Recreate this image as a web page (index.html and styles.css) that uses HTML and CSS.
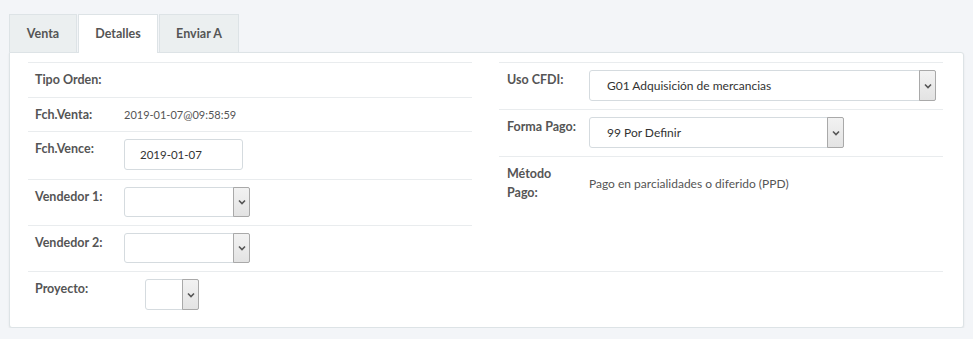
FILE: index.html
```html
<!DOCTYPE html>
<html lang="es">
<head>
  <meta charset="UTF-8" />
  <title>Detalles de venta</title>
  <link rel="stylesheet" href="styles.css">
</head>
<body>
  <div class="page">
    <ul class="tabs">
      <li class="tab tab-venta">Venta</li>
      <li class="tab tab-detalles active">Detalles</li>
      <li class="tab tab-enviar">Enviar A</li>
    </ul>

    <div class="panel">
      <div class="cols">
        <div class="col col-left">
          <div class="row">
            <label class="lbl">Tipo Orden:</label>
            <div class="val"></div>
          </div>
          <div class="row row-short">
            <label class="lbl">Fch.Venta:</label>
            <div class="val val-date">2019-01-07@09:58:59</div>
          </div>
          <div class="row row-input">
            <label class="lbl">Fch.Vence:</label>
            <div class="val"><div class="input date">2019-01-07</div></div>
          </div>
          <div class="row row-select">
            <label class="lbl">Vendedor 1:</label>
            <div class="val">
              <div class="select sel-vend"><span class="sel-text"></span><span class="arrow"><svg width="8" height="6" viewBox="0 0 8 6"><path d="M1 1.5 L4 4.5 L7 1.5" fill="none" stroke="#555" stroke-width="1.6"/></svg></span></div>
            </div>
          </div>
          <div class="row row-select">
            <label class="lbl">Vendedor 2:</label>
            <div class="val">
              <div class="select sel-vend"><span class="sel-text"></span><span class="arrow"><svg width="8" height="6" viewBox="0 0 8 6"><path d="M1 1.5 L4 4.5 L7 1.5" fill="none" stroke="#555" stroke-width="1.6"/></svg></span></div>
            </div>
          </div>
        </div>

        <div class="col col-right">
          <div class="row">
            <label class="lbl">Uso CFDI:</label>
            <div class="val">
              <div class="select sel-cfdi"><span class="sel-text">G01 Adquisición de mercancias</span><span class="arrow"><svg width="8" height="6" viewBox="0 0 8 6"><path d="M1 1.5 L4 4.5 L7 1.5" fill="none" stroke="#555" stroke-width="1.6"/></svg></span></div>
            </div>
          </div>
          <div class="row">
            <label class="lbl">Forma Pago:</label>
            <div class="val">
              <div class="select sel-forma"><span class="sel-text">99 Por Definir</span><span class="arrow"><svg width="8" height="6" viewBox="0 0 8 6"><path d="M1 1.5 L4 4.5 L7 1.5" fill="none" stroke="#555" stroke-width="1.6"/></svg></span></div>
            </div>
          </div>
          <div class="row row-fill">
            <label class="lbl lbl-wrap">Método Pago:</label>
            <div class="val val-metodo">Pago en parcialidades o diferido (PPD)</div>
          </div>
        </div>
      </div>

      <div class="row row-full">
        <label class="lbl lbl-proy">Proyecto:</label>
        <div class="val">
          <div class="select sel-proy"><span class="sel-text"></span><span class="arrow"><svg width="8" height="6" viewBox="0 0 8 6"><path d="M1 1.5 L4 4.5 L7 1.5" fill="none" stroke="#555" stroke-width="1.6"/></svg></span></div>
        </div>
      </div>
    </div>
  </div>
</body>
</html>
```

FILE: styles.css
```css
* { box-sizing: border-box; margin: 0; padding: 0; }
body {
  background: #f3f5f8;
  font-family: "Lato", "Liberation Sans", sans-serif;
  font-size: 12px;
  color: #555;
}
.page { padding: 14px 9px 0 9px; }

/* tabs */
.tabs {
  list-style: none;
  display: flex;
  height: 38px;
  position: relative;
  z-index: 1;
}
.tab {
  background: #ebeff0;
  border: 1px solid #dde3e6;
  border-bottom: none;
  margin-right: 1px;
  height: 38px;
  line-height: 37px;
  text-align: center;
  font-weight: 700;
  font-size: 12.5px;
  color: #555;
}
.tab-venta { width: 68px; }
.tab-detalles { width: 80px; }
.tab-enviar { width: 80px; }
.tab.active { background: #fff; height: 39px; }

/* panel */
.panel {
  background: #fff;
  border: 1px solid #dde3e6;
  border-radius: 0 3px 3px 3px;
  box-shadow: 0 1px 2px rgba(0, 0, 0, 0.08);
  width: 955px;
  padding: 9px 20px 9px 18px;
}
.cols {
  display: grid;
  grid-template-columns: 444px 444px;
  column-gap: 27px;
}
.col { display: flex; flex-direction: column; }
.row {
  display: flex;
  border-top: 1px solid #e9ecee;
  padding: 8px 0 8px 7px;
  line-height: 18px;
}
.row-short { padding-bottom: 7px; }
.row-input { padding-top: 7px; padding-bottom: 9px; }
.row-select { padding-top: 7px; padding-bottom: 8px; }
.row-full { padding-top: 7px; padding-bottom: 8px; }
.col-right .row { padding-left: 8px; padding-top: 7px; }
.row-fill { flex: 1; }
.lbl {
  font-weight: 700;
  font-size: 12.5px;
  color: #555;
  width: 89px;
  flex-shrink: 0;
}
.row-input .lbl, .row-select .lbl, .row-full .lbl, .col-right .lbl { padding-top: 1px; }
.col-right .lbl { width: 82px; }
.lbl-wrap { line-height: 19px; padding-right: 14px; }
.col-right .lbl-wrap { padding-top: 0; }
.lbl-proy { width: 110px; }
.val { color: #555; }
.val-date { font-size: 11px; }
.val-metodo { margin-top: 11px; }

/* inputs */
.input, .select {
  height: 31px;
  border: 1px solid #d5dbdf;
  border-radius: 3px;
  background: #fff;
  color: #333;
  line-height: 29px;
}
.date { width: 119px; padding-left: 15px; color: #333; font-size: 11.5px; }
.select { display: flex; justify-content: space-between; }
.sel-text { padding-left: 17px; color: #333; }
.arrow {
  width: 17px;
  background: linear-gradient(#f2f2f2, #e3e3e3);
  border: 1px solid #a9a9a9;
  border-radius: 0 2px 2px 0;
  display: flex;
  align-items: center;
  justify-content: center;
  margin: -1px -1px 0 0;
}
.select .arrow { height: 31px; }
.sel-vend { width: 126px; height: 30px; }
.sel-vend .arrow { height: 30px; }
.sel-cfdi { width: 347px; }
.sel-forma { width: 255px; }
.sel-proy { width: 54px; }
```
